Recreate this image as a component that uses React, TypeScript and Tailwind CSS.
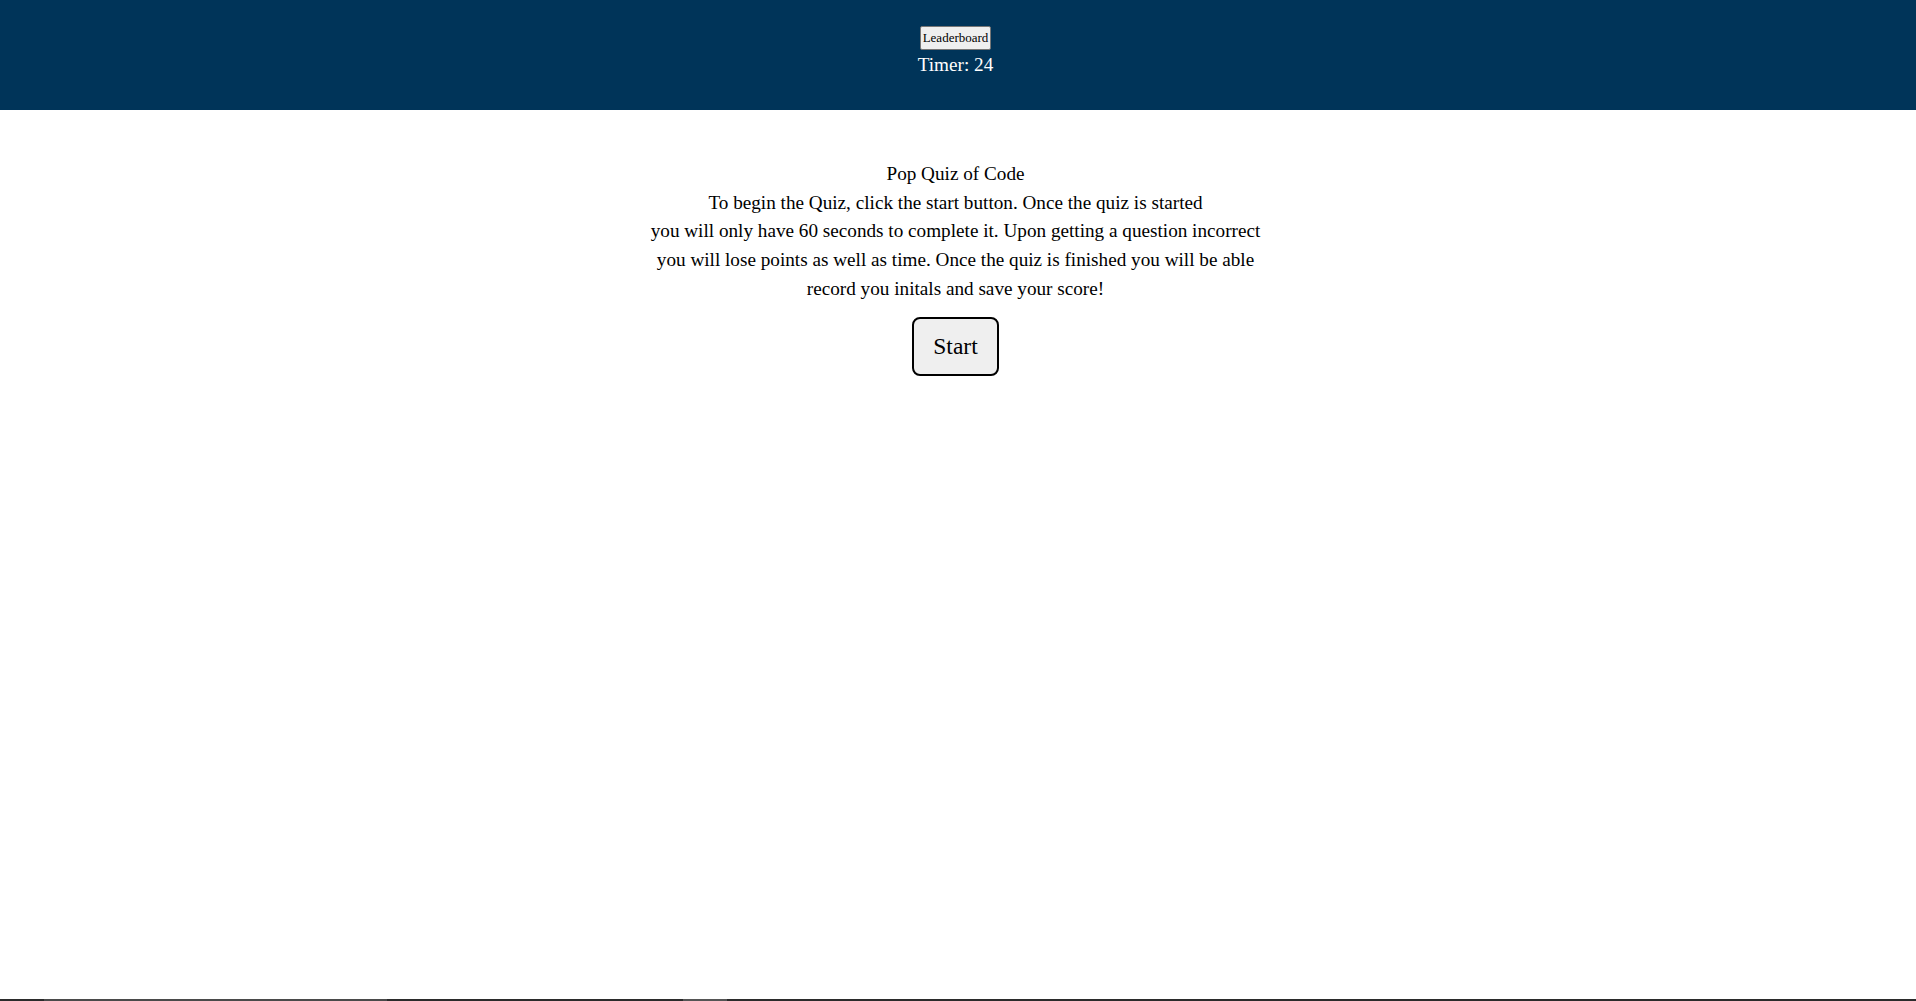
import React from 'react';

const serif = 'font-["Liberation_Serif","Times_New_Roman",serif]';

export default function App() {
  return (
    <div className={`flex h-[1001px] flex-col bg-white ${serif}`}>
      <header className="flex h-[110px] flex-col items-center bg-[#003459] pr-[5px] pt-[26px]">
        <button className="h-[24px] rounded-[2px] border border-[#767676] bg-[#efefef] px-[2px] text-[13px] text-black">
          Leaderboard
        </button>
        <p className="mt-[4px] text-[19.2px] leading-[21px] text-white">Timer: 24</p>
      </header>

      <main className="flex flex-col items-center pr-[5px] pt-[50px] text-center text-[19.2px] leading-[28.7px] text-black">
        <h1 className="text-[19.2px] font-normal">Pop Quiz of Code</h1>
        <p>
          To begin the Quiz, click the start button. Once the quiz is started
          <br />
          you will only have 60 seconds to complete it. Upon getting a question incorrect
          <br />
          you will lose points as well as time. Once the quiz is finished you will be able
          <br />
          record you initals and save your score!
        </p>
        <button className="mt-[13px] h-[59px] w-[87px] rounded-[8px] border-2 border-black bg-[#efefef] text-[23.5px]">
          Start
        </button>
      </main>

      <div className="mt-auto flex h-[2px] bg-[#2b2b2b]">
        <div className="w-[44px]" />
        <div className="w-[343px] bg-[#4a4a4a]" />
        <div className="w-[296px]" />
        <div className="w-[44px] bg-[#555]" />
      </div>
    </div>
  );
}
